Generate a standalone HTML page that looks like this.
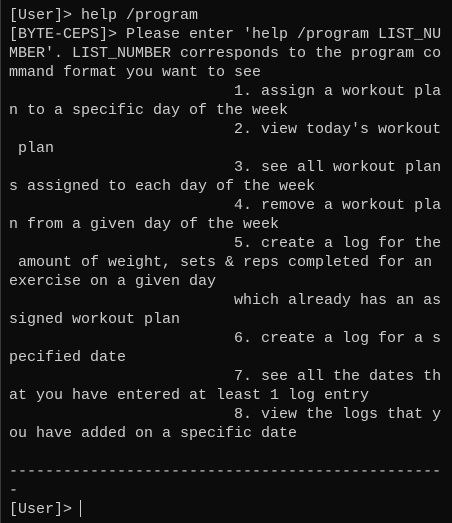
<!DOCTYPE html>
<html><head><meta charset="utf-8"><style>
html,body{margin:0;padding:0;background:#0c0c0c;width:452px;height:523px;overflow:hidden}
body{border-left:1px solid #3a3a3a;box-sizing:border-box}
pre{margin:0;position:absolute;left:9px;top:6px;font-family:"Liberation Mono",monospace;font-size:15px;line-height:19px;color:#cccccc;white-space:pre}
.cur{display:inline-block;width:1px;height:17px;background:#cccccc;vertical-align:-4px;margin-left:-1px}
</style></head><body><pre>[User]&gt; help /program
[BYTE-CEPS]&gt; Please enter 'help /program LIST_NU
MBER'. LIST_NUMBER corresponds to the program co
mmand format you want to see
                         1. assign a workout pla
n to a specific day of the week
                         2. view today's workout
 plan
                         3. see all workout plan
s assigned to each day of the week
                         4. remove a workout pla
n from a given day of the week
                         5. create a log for the
 amount of weight, sets &amp; reps completed for an
exercise on a given day
                         which already has an as
signed workout plan
                         6. create a log for a s
pecified date
                         7. see all the dates th
at you have entered at least 1 log entry
                         8. view the logs that y
ou have added on a specific date

------------------------------------------------
-
[User]&gt; <span class="cur"></span></pre></body></html>
